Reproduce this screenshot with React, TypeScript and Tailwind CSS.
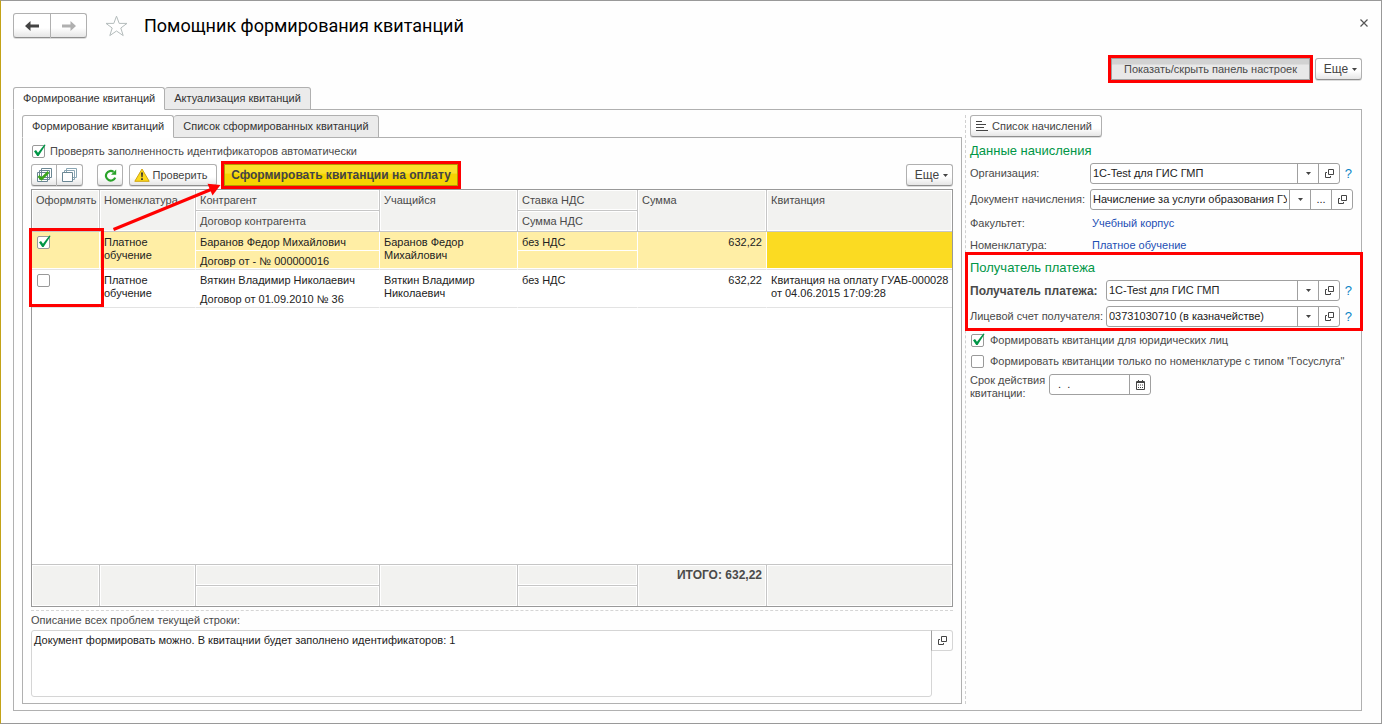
import { type InputHTMLAttributes, type ReactNode, useState } from "react";
import clsx from "clsx";

const btn =
  "flex items-center justify-center h-[22px] border border-[#b0b0b0] border-b-[#8f8f8f] rounded-[3px] bg-linear-to-b from-white from-60% to-[#e6e6e6] text-[#444] shadow-[0_1px_0_#dcdcdc] whitespace-nowrap";

function CheckBox({ className, ...props }: InputHTMLAttributes<HTMLInputElement>) {
  return (
    <span className={clsx("relative block w-[13px] h-[13px] shrink-0", className)}>
      <input
        type="checkbox"
        className="peer appearance-none block w-[13px] h-[13px] border border-[#999] rounded-[2px] bg-white"
        {...props}
      />
      <svg
        viewBox="0 0 14 14"
        className="hidden peer-checked:block absolute left-0 -top-px w-[14px] h-[14px] pointer-events-none"
      >
        <path d="M2 7.2 L4 6 L6 8.8 L12.4 0.4 L13.6 1 L6.6 12 L5.2 12 Z" fill="#009646" />
      </svg>
    </span>
  );
}

function Caret() {
  return (
    <svg viewBox="0 0 5 3" className="w-[5px] h-[3px]">
      <path d="M0 0H5L2.5 3Z" fill="#444" />
    </svg>
  );
}

function OpenIcon() {
  return (
    <svg viewBox="0 0 9 9" className="w-[9px] h-[9px]" fill="none" stroke="#444">
      <path d="M3.5 0.5H8.5V5.5H3.5ZM2 3.5H0.5V8.5H5.5V7" />
    </svg>
  );
}

function MoreButton() {
  return (
    <button className={clsx(btn, "w-[47px] gap-1 pl-1 text-xs")}>
      Еще
      <Caret />
    </button>
  );
}

function Tabs({ items, active, onChange }: { items: string[]; active: number; onChange: (i: number) => void }) {
  return (
    <div role="tablist" className="flex -mb-px relative">
      {items.map((item, i) => (
        <button
          key={item}
          role="tab"
          aria-selected={i === active}
          onClick={() => onChange(i)}
          className={clsx(
            "h-[23px] px-[9px] border border-[#b0b0b0] rounded-t-[3px] text-[#333]",
            i === active ? "bg-white border-b-white" : "bg-[#ebebeb]",
            i > 0 && "border-l-0",
          )}
        >
          {item}
        </button>
      ))}
    </div>
  );
}

interface FieldProps {
  id: string;
  label: string;
  value: string;
  wide?: boolean;
  bold?: boolean;
  dots?: boolean;
}

const addon = "w-[21px] shrink-0 border-l border-[#a0a0a0] flex items-center justify-center";

function Field({ id, label, value, wide, bold, dots }: FieldProps) {
  return (
    <div className="flex items-center">
      <label
        htmlFor={id}
        className={clsx("shrink-0 whitespace-nowrap", wide ? "w-[136px]" : "w-[120px]", bold && "font-bold text-xs")}
      >
        {label}
      </label>
      <div className="flex flex-1 min-w-0 h-[21px] border border-[#a0a0a0] rounded-[3px] bg-white text-[#222]">
        <input id={id} defaultValue={value} className="flex-1 min-w-0 px-0.5 outline-0" />
        <button className={addon} aria-label="Выбрать">
          <Caret />
        </button>
        {dots && <button className={addon}>...</button>}
        <button className={addon} aria-label="Открыть">
          <OpenIcon />
        </button>
      </div>
      {!dots && <button className="w-[13px] pr-px text-right text-[13px] text-[#0b84c6]">?</button>}
    </div>
  );
}

function LinkRow({ label, children }: { label: string; children: ReactNode }) {
  return (
    <div className="flex items-center h-[17px]">
      <span className="w-[122px]">{label}</span>
      <a href="#" className="text-[#1d4fb4]">{children}</a>
    </div>
  );
}

const rows = [
  {
    checked: true,
    item: "Платное обучение",
    partner: "Баранов Федор Михайлович",
    contract: "Договр от - № 000000016",
    student: "Баранов Федор Михайлович",
    vat: "без НДС",
    sum: "632,22",
    receipt: "",
  },
  {
    checked: false,
    item: "Платное обучение",
    partner: "Вяткин Владимир Николаевич",
    contract: "Договор от 01.09.2010 № 36",
    student: "Вяткин Владимир Николаевич",
    vat: "без НДС",
    sum: "632,22",
    receipt: "Квитанция на оплату ГУАБ-000028 от 04.06.2015 17:09:28",
  },
];

const head =
  "px-1 pt-1 align-top text-left font-normal border-r border-b border-[#c6c6c6] bg-[#f2f2f0] shadow-[inset_0_0_0_1px_#fff]";
const foot = "px-1 pt-1 align-top border-r border-[#c6c6c6] bg-[#f2f2f0] shadow-[inset_0_0_0_1px_#fff]";

function ReceiptTable() {
  return (
    <div className="relative mt-[3px] border border-[#999] bg-white">
      <table className="w-full table-fixed border-separate border-spacing-0 leading-[13px]">
        <colgroup>
          <col className="w-[68px]" />
          <col className="w-[96px]" />
          <col className="w-[184px]" />
          <col className="w-[138px]" />
          <col className="w-[120px]" />
          <col className="w-[129px]" />
          <col />
        </colgroup>
        <thead>
          <tr className="h-[21px]">
            <th rowSpan={2} className={head}>Оформлять</th>
            <th rowSpan={2} className={head}>Номенклатура</th>
            <th className={head}>Контрагент</th>
            <th rowSpan={2} className={head}>Учащийся</th>
            <th className={head}>Ставка НДС</th>
            <th rowSpan={2} className={head}>Сумма</th>
            <th rowSpan={2} className={clsx(head, "border-r-0")}>Квитанция</th>
          </tr>
          <tr className="h-[21px]">
            <th className={head}>Договор контрагента</th>
            <th className={head}>Сумма НДС</th>
          </tr>
        </thead>
        {rows.map((row) => {
          const cell = clsx("px-1 pt-1 align-top border-r border-r-white", row.checked && "bg-[#ffeea5]");
          const full = clsx(cell, "border-b border-b-[#e3e3e3]", row.checked && "shadow-[inset_0_-1px_0_#fff]");
          return (
            <tbody key={row.partner} className="text-[#222]">
              <tr className="h-[19px]">
                <td rowSpan={2} className={full}>
                  <CheckBox defaultChecked={row.checked} aria-label={row.partner} className="ml-px" />
                </td>
                <td rowSpan={2} className={full}>{row.item}</td>
                <td className={clsx(cell, "border-b border-b-white")}>{row.partner}</td>
                <td rowSpan={2} className={full}>{row.student}</td>
                <td className={clsx(cell, "border-b border-b-white")}>{row.vat}</td>
                <td rowSpan={2} className={clsx(full, "text-right")}>{row.sum}</td>
                <td
                  rowSpan={2}
                  className={clsx(
                    "pl-1 pt-1 align-top border-b border-b-[#e3e3e3]",
                    row.checked && "bg-[#fbdb22] shadow-[inset_0_-1px_0_#fff]",
                  )}
                >
                  {row.receipt}
                </td>
              </tr>
              <tr className="h-[19px]">
                <td className={full}>{row.contract}</td>
                <td className={full}></td>
              </tr>
            </tbody>
          );
        })}
        <tbody>
          <tr className="h-[257px]">
            <td colSpan={7} className="border-b border-[#c6c6c6]"></td>
          </tr>
        </tbody>
        <tfoot>
          <tr className="h-[21px]">
            <td rowSpan={2} className={foot}></td>
            <td rowSpan={2} className={foot}></td>
            <td className={head}></td>
            <td rowSpan={2} className={foot}></td>
            <td className={head}></td>
            <td rowSpan={2} className={clsx(foot, "text-right font-bold text-xs leading-[13px]")}>ИТОГО: 632,22</td>
            <td rowSpan={2} className={clsx(foot, "border-r-0")}></td>
          </tr>
          <tr className="h-5">
            <td className={foot}></td>
            <td className={foot}></td>
          </tr>
        </tfoot>
      </table>

      {/* callouts over the first column */}
      <div className="absolute -left-[3px] top-[38px] w-[75px] h-[79px] border-3 border-[#f00] pointer-events-none" />
      <svg
        viewBox="0 0 112 49"
        className="absolute left-[78px] -top-[7px] w-[112px] h-[49px] pointer-events-none"
        aria-hidden="true"
      >
        <path d="M3.5 46.5 L101 6.5" stroke="#f00" strokeWidth="3" />
        <path d="M110.5 2 L97.5 0.8 L102.5 12.5 Z" fill="#f00" />
      </svg>
    </div>
  );
}

export default function App() {
  const [tab, setTab] = useState(0);
  const [innerTab, setInnerTab] = useState(0);
  const [panelOpen, setPanelOpen] = useState(true);

  return (
    <div className="min-h-screen flex flex-col pl-3 pr-[19px] pt-3 pb-3 border border-[#999] border-l-[#c3a217] bg-[#fefefe] font-['Liberation_Sans',Arial,sans-serif] text-[11px] leading-[13px] text-[#4a4a4a]">
      <header className="flex items-center h-[25px]">
        <div className="flex">
          <button className={clsx(btn, "h-[25px] w-[38px] rounded-r-none")} aria-label="Назад">
            <svg viewBox="0 0 14 10" className="w-[14px] h-[10px]">
              <path d="M0 5L5.5 0V3.6H14V6.4H5.5V10Z" fill="#444" />
            </svg>
          </button>
          <button className={clsx(btn, "h-[25px] w-[36px] border-l-0 rounded-l-none")} aria-label="Вперед">
            <svg viewBox="0 0 14 10" className="w-[14px] h-[10px]">
              <path d="M14 5L8.5 0V3.6H0V6.4H8.5V10Z" fill="#b0b0b0" />
            </svg>
          </button>
        </div>
        <button className="ml-[18px]" aria-label="В избранное">
          <svg viewBox="0 0 23 22" className="w-[23px] h-[22px]" fill="#fff" stroke="#b4bcbc">
            <path d="M11.5 1.2L14.2 8.4H22L15.8 13L18.2 20.6L11.5 16L4.8 20.6L7.2 13L1 8.4H8.8Z" />
          </svg>
        </button>
        <h1 className="ml-4 font-[Roboto,sans-serif] text-lg leading-6 text-black">Помощник формирования квитанций</h1>
        <button className="ml-auto -mr-1.5 self-start mt-[6px]" aria-label="Закрыть">
          <svg viewBox="0 0 8 8" className="w-2 h-2" stroke="#555" strokeWidth="1.2">
            <path d="M0.5 0.5L7.5 7.5M7.5 0.5L0.5 7.5" />
          </svg>
        </button>
      </header>

      <div className="mt-5 flex justify-end gap-[5px]">
        <button
          onClick={() => setPanelOpen(!panelOpen)}
          className="h-[22px] w-[199px] border border-[#a0a0a0] bg-linear-to-b from-[#d2d2d2] from-25% to-[#e8e8e8] to-30% outline-3 outline-[#f00]"
        >
          Показать/скрыть панель настроек
        </button>
        <MoreButton />
      </div>

      <div className="mt-[7px] flex-1 flex flex-col">
        <Tabs items={["Формирование квитанций", "Актуализация квитанций"]} active={tab} onChange={setTab} />
        <div className="flex-1 flex border border-[#b0b0b0] pl-2 pt-[5px] pb-1.5">
          <section className="flex-1 min-w-0 flex flex-col">
            <Tabs
              items={["Формирование квитанций", "Список сформированных квитанций"]}
              active={innerTab}
              onChange={setInnerTab}
            />
            <div className="flex-1 border border-[#b0b0b0] px-2 pt-1.5 pb-1.5">
              <label className="flex items-center gap-[5px] h-[14px] pl-px w-fit">
                <CheckBox defaultChecked />
                Проверять заполненность идентификаторов автоматически
              </label>

              <div className="mt-1.5 flex">
                <button className={clsx(btn, "w-[26px] rounded-r-none")} aria-label="Отметить все">
                  <svg viewBox="0 0 17 16" className="w-[17px] h-4" fill="#fff" stroke="#6b8794">
                    <path d="M5.5 1.5H15.5V10.5H5.5ZM3.5 3.5H13.5V12.5H3.5ZM1.5 5.5H11.5V14.5H1.5Z" />
                    <path d="M2.5 9L5.5 12L12.5 5" fill="none" stroke="#3aa51a" strokeWidth="2.6" />
                  </svg>
                </button>
                <button className={clsx(btn, "w-[26px] border-l-0 rounded-l-none")} aria-label="Снять отметки">
                  <svg viewBox="0 0 17 16" className="w-[17px] h-4" fill="#fff" stroke="#6b8794">
                    <path d="M5.5 1.5H15.5V10.5H5.5ZM3.5 3.5H13.5V12.5H3.5Z" stroke="#8aa6b4" />
                    <path d="M1.5 5.5H11.5V14.5H1.5Z" />
                  </svg>
                </button>
                <button className={clsx(btn, "ml-[14px] w-[26px]")} aria-label="Обновить">
                  <svg viewBox="0 0 13 13" className="w-[13px] h-[13px]">
                    <path d="M9.6 2.9A4.8 4.8 0 1 0 11.2 8.6" fill="none" stroke="#2aa32a" strokeWidth="2.2" />
                    <path d="M12.2 0.6V5.8H7Z" fill="#2aa32a" />
                  </svg>
                </button>
                <button className={clsx(btn, "ml-1.5 w-[88px] pr-1 gap-0.5")}>
                  <svg viewBox="0 0 16 14" className="w-4 h-[14px]">
                    <path d="M8 1L15.2 13.3H0.8Z" fill="#fbd91c" stroke="#d0a512" strokeLinejoin="round" />
                    <path d="M7 4.5H9L8.6 9.3H7.4ZM7.1 10.3H8.9V12H7.1Z" fill="#333" />
                  </svg>
                  Проверить
                </button>
                <button className="ml-[7px] w-[234px] h-[22px] border border-[#b39a00] bg-linear-to-b from-[#fbe02c] from-40% to-[#f5d400] to-45% font-bold text-xs text-[#444] outline-3 outline-[#f00]">
                  Сформировать квитанции на оплату
                </button>
                <div className="ml-auto">
                  <MoreButton />
                </div>
              </div>

              <ReceiptTable />

              <div className="mt-[3px] border-t border-dashed border-[#d5d5d5]">
                <label htmlFor="problems" className="flex items-center h-[19px]">
                  Описание всех проблем текущей строки:
                </label>
                <div className="flex items-start">
                  <textarea
                    id="problems"
                    defaultValue="Документ формировать можно. В квитацнии будет заполнено идентификаторов: 1"
                    className="flex-1 h-[67px] px-0.5 py-[3px] resize-none outline-0 border border-[#d5d5d5] rounded-[3px] rounded-tr-none bg-white text-[#222]"
                  />
                  <button
                    className="-ml-px w-[22px] h-[21px] flex items-center justify-center border border-[#d5d5d5] border-l-[#a0a0a0] rounded-r-[3px]"
                    aria-label="Открыть"
                  >
                    <OpenIcon />
                  </button>
                </div>
              </div>
            </div>
          </section>

          {panelOpen && (
            <aside className="ml-[3px] w-[396px] shrink-0 border-l border-dashed border-[#d0d0d0] pl-1 pr-2 flex flex-col gap-[5px]">
              <button className={clsx(btn, "w-[132px] gap-1 pr-1")}>
                <svg viewBox="0 0 12 10" className="w-3 h-[10px]" stroke="#444">
                  <path d="M0 0.5H6M0 3.5H10M0 6.5H8M0 9.5H12" />
                </svg>
                Список начислений
              </button>
              <h2 className="h-4 text-[13px] leading-[18px] text-[#009646]">Данные начисления</h2>
              <Field id="org" label="Организация:" value="1С-Test для ГИС ГМП" />
              <Field id="doc" label="Документ начисления:" value="Начисление за услуги образования ГУАБ" dots />
              <LinkRow label="Факультет:">Учебный корпус</LinkRow>
              <LinkRow label="Номенклатура:">Платное обучение</LinkRow>
              <div className="relative flex flex-col gap-[5px]">
                <h2 className="h-4 text-[13px] leading-[18px] text-[#009646]">Получатель платежа</h2>
                <Field id="payee" label="Получатель платежа:" value="1С-Test для ГИС ГМП" wide bold />
                <Field id="account" label="Лицевой счет получателя:" value="03731030710 (в казначействе)" wide />
                <div className="absolute -left-[5px] -right-[10px] -top-[7px] -bottom-1 border-3 border-[#f00] pointer-events-none" />
              </div>
              <label className="flex items-center gap-1.5 h-4 pl-px w-fit">
                <CheckBox defaultChecked />
                Формировать квитанции для юридических лиц
              </label>
              <label className="flex items-center gap-1.5 h-4 pl-px w-fit whitespace-nowrap">
                <CheckBox />
                Формировать квитанции только по номенклатуре с типом "Госуслуга"
              </label>
              <div className="flex items-start">
                <label htmlFor="term" className="w-[79px]">
                  Срок действия квитанции:
                </label>
                <div className="flex w-[102px] h-[21px] border border-[#a0a0a0] rounded-[3px] bg-white text-[#222]">
                  <input id="term" defaultValue=".  ." className="flex-1 min-w-0 px-2 outline-0" />
                  <button className={addon} aria-label="Календарь">
                    <svg viewBox="0 0 9 10" className="w-[9px] h-[10px]" fill="none" stroke="#444">
                      <path d="M0.5 1.5H8.5V9.5H0.5ZM0 2.5H9M2.5 0V2M6.5 0V2" />
                      <path d="M2 5H7M2 7.5H7" strokeDasharray="1 1" />
                    </svg>
                  </button>
                </div>
              </div>
            </aside>
          )}
        </div>
      </div>
    </div>
  );
}
